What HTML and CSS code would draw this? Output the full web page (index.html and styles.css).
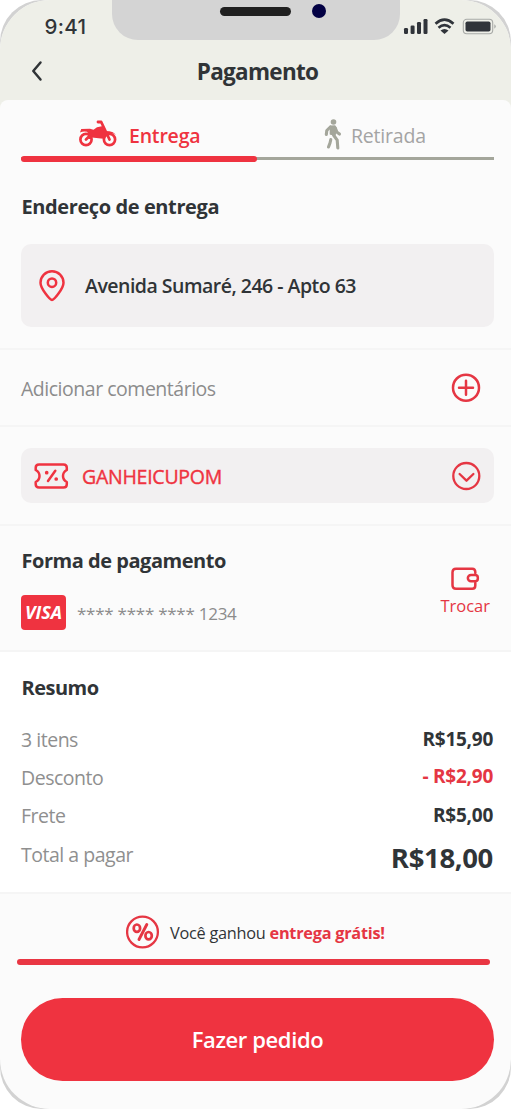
FILE: index.html
```html
<!DOCTYPE html>
<html lang="pt-BR">
<head>
<meta charset="utf-8">
<title>Pagamento</title>
<link rel="stylesheet" href="styles.css">
</head>
<body>
<div class="phone">
<main class="screen">
  <header class="header">
    <div class="notch"><span class="speaker"></span><span class="camera"></span></div>
    <div class="status">
      <span class="time">9:41</span>
      <svg class="status-icons" width="94" height="18" viewBox="0 0 94 18">
        <g fill="#30343a">
          <rect x="1" y="11" width="4" height="6" rx="1.2"/><rect x="7.600" y="8.500" width="4" height="8.500" rx="1.200"/><rect x="14" y="5" width="4" height="12" rx="1.200"/><rect x="20.500" y="2" width="4" height="15" rx="1.200"/>
          <path d="M37.500 13.500q4-3 8 0l-4 3.500z"/>
          <rect x="62.500" y="4.500" width="25" height="10" rx="1.800"/>
        </g>
        <path d="M32.500 6.700q9-8 18 0M35.500 10.700q6-5 12 0" fill="none" stroke="#30343a" stroke-width="2.700"/>
        <rect x="60.300" y="2.300" width="29.400" height="14.400" rx="3.500" fill="none" stroke="#a8aaa7" stroke-width="1.100"/>
        <path d="M91.300 7.300q3 2.200 0 4.400z" fill="#a8aaa7"/>
      </svg>
    </div>
    <div class="titlebar">
      <svg class="back" width="14" height="24" viewBox="0 0 14 24"><path d="M11.500 3.500L4.300 12l7.200 8.500" fill="none" stroke="#303437" stroke-width="2.500" stroke-linecap="round" stroke-linejoin="round"/></svg>
      <h1 class="title">Pagamento</h1>
    </div>
  </header>

  <section class="delivery">
    <nav class="tabs">
      <a class="tab tab-active">
        <svg class="moto" width="38" height="28" viewBox="0 0 38 28">
          <g fill="none" stroke="#ef3340" stroke-linecap="round" stroke-linejoin="round">
            <circle cx="7" cy="19.500" r="5.600" stroke-width="2.700"/><circle cx="30.500" cy="19.500" r="5.600" stroke-width="2.700"/>
            <path d="M19 2h3.200L30.500 19.500M7 19.500l5-5" stroke-width="2.800"/>
          </g>
          <path d="M1 12.500L2.200 9l8.800-.2 3.500 1L18 7.200l6-1.200 2.300 5 4.200.2q3.500.3 6.500 3.500-3.500-1.600-6-1.300-4.500.4-6.500 5.400l-5-.5-6.500-.8-1.300 1.700-2.500-.5.500-4.500L8 11.700q-4-.7-7 .8z" fill="#ef3340"/>
        </svg>
        <span class="entrega">Entrega</span>
      </a>
      <a class="tab tab-idle">
        <svg class="walker" width="18" height="31" viewBox="0 0 18 31">
          <circle cx="9.500" cy="3" r="2.800" fill="#a4a69b"/>
          <path d="M6.500 7.300L10.800 7l1.200 1.600-1 7.400-4.600-1z" fill="#a4a69b" stroke="#a4a69b" stroke-width="1.500" stroke-linejoin="round"/>
          <path d="M6.300 8L2.800 11.500 2.300 15.500M11.500 9.500l1.500 3.800 2.500 1.800M9.500 16l3.700 5.200.6 7.800M6.800 20.500L6 24l-1.500 4" fill="none" stroke="#a4a69b" stroke-width="3.100" stroke-linecap="round" stroke-linejoin="round"/>
        </svg>
        <span class="retirada">Retirada</span>
      </a>
    </nav>
    <div class="tabline"><span></span></div>
    <h2 class="h-address">Endereço de entrega</h2>
    <div class="address">
      <svg width="28" height="34" viewBox="0 0 28 34" fill="none" stroke="#ef3340" stroke-width="2.500"><path d="M14 31C12 31 2.500 19.500 2.500 13.700a11.500 11.500 0 0 1 23 0C25.500 19.500 16 31 14 31z"/><circle cx="14" cy="13.700" r="4.200"/></svg>
      <span class="street">Avenida Sumaré, 246 - Apto 63</span>
    </div>
  </section>

  <section class="comments">
    <span class="add">Adicionar comentários</span>
    <svg width="30" height="30" viewBox="0 0 30 30" fill="none" stroke="#e53643" stroke-width="2.500" stroke-linecap="round"><circle cx="15" cy="14.700" r="13"/><path d="M8 14.700h14M15 7.700v14"/></svg>
  </section>

  <section class="coupon-area">
    <div class="coupon">
      <svg width="36" height="28" viewBox="0 0 36 28" fill="none" stroke="#ef3340" stroke-width="2.500" stroke-linecap="round" stroke-linejoin="round">
        <path d="M6 2.500h24.500q3.300 0 3.300 3.300V8q-3.800 2-3.800 6t3.800 6v2.200q0 3.300-3.300 3.300H6q-3.300 0-3.300-3.300V20Q6.500 18 6.500 14T2.700 8V5.800Q2.700 2.500 6 2.500z"/>
        <path d="M22.300 8.800L15 19"/><circle cx="13.700" cy="10.700" r="1" stroke-width="1.700" fill="#ef3340"/><circle cx="23.200" cy="17" r="1" stroke-width="1.700" fill="#ef3340"/>
      </svg>
      <span class="code">GANHEICUPOM</span>
      <svg class="chev" width="30" height="30" viewBox="0 0 30 30" fill="none" stroke="#e53643" stroke-width="2.300" stroke-linecap="round" stroke-linejoin="round"><circle cx="15.300" cy="15" r="13"/><path d="M8.600 13l6.900 6.700 6.900-6.700"/></svg>
    </div>
  </section>

  <section class="payment">
    <div class="method">
      <h2 class="h-pay">Forma de pagamento</h2>
      <div class="card"><span class="visa"><b>VISA</b></span><span class="digits">**** **** **** 1234</span></div>
    </div>
    <div class="change">
      <svg width="30" height="26" viewBox="0 0 30 26" fill="none" stroke="#e53643" stroke-width="2.500" stroke-linecap="round" stroke-linejoin="round"><path d="M25.300 7V6q0-3.300-3-3.300H6q-3.500 0-3.500 3.500v13q0 3.500 3.500 3.500h16.300q3 0 3-3.300V17"/><path d="M21 8.900h4q2.800 0 2.800 2.500v1.300q0 2.500-2.800 2.500h-4a3.150 3.150 0 0 1 0-6.300z"/></svg>
      <span class="trocar">Trocar</span>
    </div>
  </section>

  <section class="summary">
    <h2 class="h-sum">Resumo</h2>
    <div class="row row-items"><span>3 itens</span><b>R$15,90</b></div>
    <div class="row row-discount"><span>Desconto</span><b>- R$2,90</b></div>
    <div class="row row-shipping"><span>Frete</span><b>R$5,00</b></div>
    <div class="row row-total"><span>Total a pagar</span><b>R$18,00</b></div>
  </section>

  <footer class="footer">
    <div class="promo">
      <svg width="34" height="34" viewBox="0 0 34 34" fill="none" stroke="#e53643" stroke-width="2.300" stroke-linecap="round"><circle cx="16.500" cy="17" r="15.400"/><path d="M20.800 9.500l-7.800 15" stroke-width="2.900"/><ellipse cx="10.900" cy="13.200" rx="3.200" ry="3.700" stroke-width="2.700"/><ellipse cx="22.600" cy="20.700" rx="3.200" ry="3.700" stroke-width="2.700"/></svg>
      <span class="won">Você ganhou <b>entrega grátis!</b></span>
    </div>
    <div class="progress"></div>
    <button class="order"><span>Fazer pedido</span></button>
  </footer>
</main>
</div>
</body>
</html>
```
FILE: styles.css
```css
* { box-sizing: border-box; }
body { margin: 0; background: #fff; font-family: "Open Sans", sans-serif; color: #303437; }
h1, h2 { margin: 0; font-weight: 700; }
svg { display: block; flex: none; }
span, b, h1, h2 { white-space: nowrap; }
.phone { width: 511px; height: 1109px; border-radius: 42px; background: #d2d2d2; overflow: hidden; }
.screen { height: 1109px; border-radius: 50px; background: #fbfbfb; overflow: hidden; display: flex; flex-direction: column; }

.header { position: relative; height: 109px; background: #eeefe8; flex: none; }
.notch { position: absolute; left: 112px; top: 0; width: 288px; height: 40px; border-radius: 0 0 26px 26px; background: #d4d4d4; }
.speaker { position: absolute; left: 108px; top: 7px; width: 71px; height: 9px; border-radius: 5px; background: #202020; }
.camera { position: absolute; left: 200px; top: 4px; width: 14px; height: 14px; border-radius: 50%; background: #020043; }
.status { height: 47px; padding: 16px 14px 0 44px; display: flex; justify-content: space-between; align-items: flex-start; }
.time { font: 500 20.500px/22px Inter, sans-serif; letter-spacing: 0.3px; padding-left: 0.5px; }
.status-icons { margin-top: 1px; }
.titlebar { display: grid; grid-template-columns: 14px 1fr 14px; padding: 9px 26px 0 29px; align-items: center; }
.back { margin-top: -1px; }
.title { font-size: 22.500px; line-height: 28px; letter-spacing: -0.700px; text-align: center; padding: 2px 0 0 1px; }

.delivery { height: 250px; flex: none; margin-top: -9px; padding: 0 17px 0 21px; border-bottom: 2px solid #f5f5f5; border-radius: 8px 8px 0 0; background: #fbfbfb; position: relative; }
.tabs { display: grid; grid-template-columns: 236px 237px; height: 56px; padding-top: 19px; }
.tab { display: flex; align-items: center; height: 31px; font-size: 19.500px; line-height: 31px; letter-spacing: -0.200px; }
.tab span { margin-top: 1px; }
.tab-active { padding-left: 58px; gap: 12px; color: #ef3340; font-weight: 600; }
.moto { margin-top: -2px; }
.walker { margin-top: -1px; }
.tab-idle { padding-left: 67px; gap: 9px; color: #a4a4a4; }
.tabline { height: 6px; display: flex; align-items: center; background: linear-gradient(#a4a69b, #a4a69b) 0 1px / 100% 3px no-repeat; }
.tabline span { width: 236px; height: 6px; border-radius: 3px; background: #ef3340; }
.h-address { margin-top: 31px; font-size: 20px; line-height: 28px; letter-spacing: -0.400px; padding-left: 0.5px; }
.address { margin-top: 23px; height: 83px; border-radius: 10px; background: #f2f0f1; padding-left: 17px; display: flex; align-items: center; gap: 19px; font-size: 19.500px; font-weight: 600; letter-spacing: -0.510px; }

.comments { height: 77px; flex: none; border-bottom: 2px solid #f5f5f5; padding: 0 30px 0 21px; display: flex; align-items: center; justify-content: space-between; font-size: 19.500px; letter-spacing: -0.480px; color: #8c8c8c; }
.comments .add { margin-top: 2px; }
.coupon-area { height: 99px; flex: none; border-bottom: 2px solid #f5f5f5; padding: 21px 17px 0 21px; }
.coupon { height: 55px; border-radius: 10px; background: #f2f0f1; padding: 0 13px 0 12px; display: flex; align-items: center; font-size: 19.500px; letter-spacing: -0.250px; color: #ef3340; }
.code { margin: 1px 0 0 13px; -webkit-text-stroke: 0.4px #ef3340; }
.chev { margin-left: auto; }

.payment { height: 126px; flex: none; border-bottom: 2px solid #f5f5f5; padding: 21px 20px 0 21px; display: flex; justify-content: space-between; }
.h-pay { font-size: 20px; line-height: 28px; letter-spacing: -0.470px; padding-left: 0.5px; }
.card { margin-top: 20px; display: flex; align-items: center; }
.visa { width: 45px; height: 35px; border-radius: 4px; background: #ef3340; color: #fff; font-size: 18px; line-height: 35px; font-style: italic; text-align: center; }
.visa b { font-weight: 700; letter-spacing: -0.100px; }
.digits { margin: 2px 0 0 11px; font-size: 17px; letter-spacing: -0.260px; color: #8c8c8c; }
.change { padding-top: 19px; display: flex; flex-direction: column; align-items: center; color: #e53643; font-size: 16.500px; line-height: 24px; }
.change svg { margin-right: 1px; }
.trocar { margin: 2px 1px 0 0; }

.summary { height: 242px; flex: none; background: #fff; border-bottom: 2px solid #f5f5f5; padding: 22px 18px 0 21px; }
.h-sum { font-size: 20px; line-height: 28px; letter-spacing: -0.500px; margin-bottom: 18px; padding-left: 0.5px; }
.row { display: flex; justify-content: space-between; align-items: center; height: 38px; line-height: 28px; }
.row span { color: #8f8f8f; font-size: 19.500px; letter-spacing: -0.480px; margin-top: 3px; }
.row b { font-size: 19px; letter-spacing: -0.250px; }
.row-items { height: 37px; }
.row-discount b { color: #e53643; }
.row-shipping { height: 39px; }
.row-total { height: 40px; }
.row-total span { margin-top: 1px; }
.row-total b { font-size: 27.500px; letter-spacing: -0.350px; margin-top: 8px; }

.footer { padding: 21px 17px 0 17px; }
.promo { height: 34px; padding-left: 109px; display: flex; align-items: center; gap: 10px; font-size: 16.300px; letter-spacing: -0.250px; }
.won { margin-top: 2px; }
.promo b { color: #e53643; }
.progress { width: 473px; height: 6px; margin-top: 10px; border-radius: 3px; background: #e93643; }
.order { display: block; width: 473px; height: 83px; margin: 33px 0 0 4px; padding: 0 0 2px; border: 0; border-radius: 42px; background: #ef3340; color: #fff; font: 600 22px/32px "Open Sans", sans-serif; letter-spacing: -0.400px; }
```
